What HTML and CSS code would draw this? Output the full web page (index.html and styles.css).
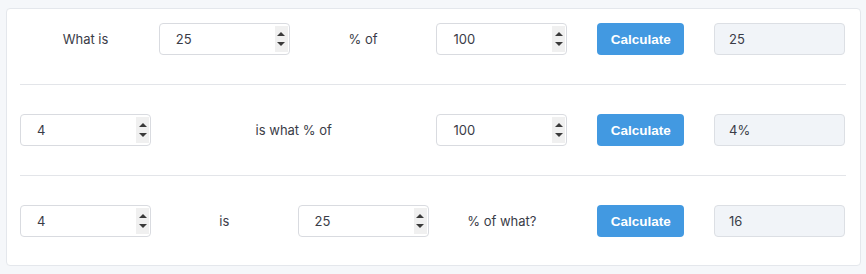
FILE: index.html
```html
<!DOCTYPE html>
<html>
<head>
<meta charset="utf-8">
<link rel="stylesheet" href="styles.css">
</head>
<body>
<div class="card">
  <div class="row">
    <div class="cell label">What is</div>
    <div class="cell"><div class="num"><span class="val">25</span><span class="spin"><i class="up"></i><i class="down"></i></span></div></div>
    <div class="cell label">% of</div>
    <div class="cell"><div class="num"><span class="val">100</span><span class="spin"><i class="up"></i><i class="down"></i></span></div></div>
    <div class="cell center"><button class="btn">Calculate</button></div>
    <div class="cell"><div class="result">25</div></div>
  </div>
  <hr class="sep">
  <div class="row">
    <div class="cell"><div class="num"><span class="val">4</span><span class="spin"><i class="up"></i><i class="down"></i></span></div></div>
    <div class="cell label span2">is what % of</div>
    <div class="cell"><div class="num"><span class="val">100</span><span class="spin"><i class="up"></i><i class="down"></i></span></div></div>
    <div class="cell center"><button class="btn">Calculate</button></div>
    <div class="cell"><div class="result">4%</div></div>
  </div>
  <hr class="sep">
  <div class="row">
    <div class="cell"><div class="num"><span class="val">4</span><span class="spin"><i class="up"></i><i class="down"></i></span></div></div>
    <div class="cell label">is</div>
    <div class="cell"><div class="num"><span class="val">25</span><span class="spin"><i class="up"></i><i class="down"></i></span></div></div>
    <div class="cell label">% of what?</div>
    <div class="cell center"><button class="btn">Calculate</button></div>
    <div class="cell"><div class="result">16</div></div>
  </div>
</div>
</body>
</html>
```
FILE: styles.css
```css
* { box-sizing: border-box; }
html, body { margin: 0; padding: 0; }
body {
  background: #f5f7fa;
  font-family: Inter, "Noto Sans", sans-serif;
  font-size: 13px;
  color: #3a3c47;
  padding: 8px 6px 0 6px;
  width: 866px;
  height: 274px;
}
.card {
  width: 855px;
  background: #fff;
  border: 1px solid #e4e7ec;
  border-radius: 4px;
  padding: 0 14px 14px 13px;
}
.row {
  display: grid;
  grid-template-columns: repeat(6, 131px);
  column-gap: 7.8px;
  padding: 14px 0;
  align-items: center;
}
.cell { height: 32px; display: flex; align-items: center; }
.label { justify-content: center; }
.span2 { grid-column: span 2; }
.center { justify-content: center; }
.sep {
  margin: 15px 0;
  border: 0;
  border-top: 1px solid #e3e5e9;
  height: 0;
}
.num {
  width: 100%;
  height: 32px;
  border: 1px solid #d9dbe0;
  border-radius: 4px;
  display: flex;
  align-items: stretch;
  background: #fff;
}
.val {
  flex: 1;
  display: flex;
  align-items: center;
  padding-left: 16px;
}
.spin {
  width: 13px;
  margin: 2px 1px 2px 0;
  background: #f0f0f0;
  display: flex;
  flex-direction: column;
  justify-content: space-between;
  align-items: center;
  padding: 6px 0 6px;
}
.up, .down {
  width: 0; height: 0;
  border-left: 4px solid transparent;
  border-right: 4px solid transparent;
}
.up { border-bottom: 4.5px solid #3a3a3a; }
.down { border-top: 4.5px solid #3a3a3a; }
.btn {
  width: 87px;
  height: 32px;
  background: #4299e1;
  color: #fff;
  border: 0;
  border-radius: 4px;
  font-family: "Liberation Sans", Arial, sans-serif;
  font-weight: bold;
  font-size: 13.5px;
  padding: 0;
}
.result {
  width: 100%;
  height: 32px;
  background: #f1f4f8;
  border: 1px solid #dcdfe4;
  border-radius: 4px;
  display: flex;
  align-items: center;
  padding-left: 14px;
}
```
